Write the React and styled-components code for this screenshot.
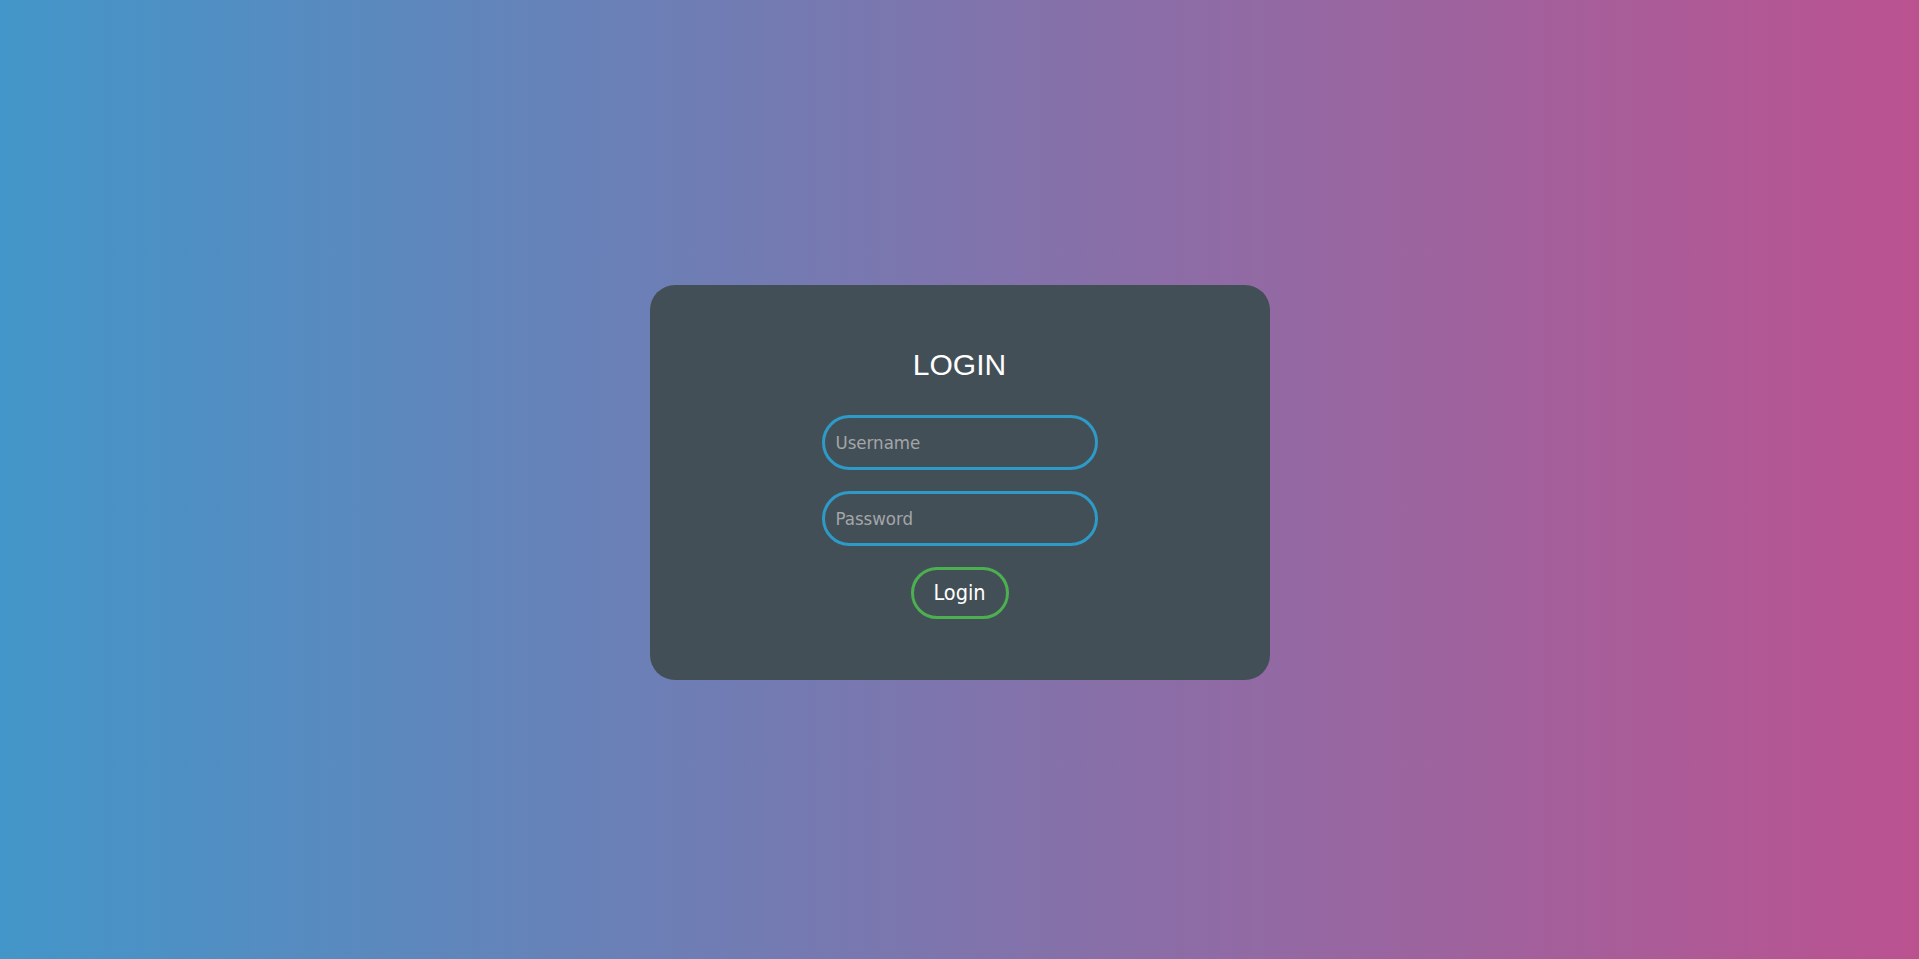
import React from 'react';
import styled, { createGlobalStyle } from 'styled-components';

const GlobalStyle = createGlobalStyle`
  * {
    box-sizing: border-box;
  }
  html, body {
    margin: 0;
    padding: 0;
  }
  body {
    font-family: "Liberation Sans", Arial, sans-serif;
  }
`;

const Page = styled.div`
  min-height: 100vh;
  padding-top: 5px;
  display: flex;
  justify-content: center;
  align-items: center;
  background: linear-gradient(to right, #4396c9, #bb5290);
`;

const Card = styled.form`
  width: 620px;
  padding: 63px 0 61px;
  display: flex;
  flex-direction: column;
  align-items: center;
  background-color: #434f57;
  border-radius: 25px;
`;

const Title = styled.h2`
  margin: 0 0 33px;
  font-family: "Liberation Sans", Arial, sans-serif;
  font-size: 30px;
  line-height: 34px;
  font-weight: 400;
  color: #ffffff;
`;

const Input = styled.input`
  width: 276px;
  height: 55px;
  margin-bottom: ${(p) => p.$gap}px;
  padding: 0 11px;
  border: 3px solid #2e9ac7;
  border-radius: 28px;
  background: transparent;
  outline: none;
  color: #ffffff;
  font-family: "DejaVu Sans", Verdana, sans-serif;
  font-stretch: condensed;
  font-size: 18.5px;

  &::placeholder {
    color: #a3a6a8;
  }
`;

const Button = styled.button`
  width: 98px;
  height: 52px;
  padding: 0;
  border: 3px solid #4caf50;
  border-radius: 26px;
  background: transparent;
  color: #ffffff;
  font-family: "DejaVu Sans", Verdana, sans-serif;
  font-stretch: condensed;
  font-size: 21.5px;
  cursor: pointer;
`;

export default function App() {
  return (
    <>
      <GlobalStyle />
      <Page>
        <Card onSubmit={(e) => e.preventDefault()}>
          <Title>LOGIN</Title>
          <Input type="text" placeholder="Username" $gap={21} />
          <Input type="password" placeholder="Password" $gap={21} />
          <Button type="submit">Login</Button>
        </Card>
      </Page>
    </>
  );
}
